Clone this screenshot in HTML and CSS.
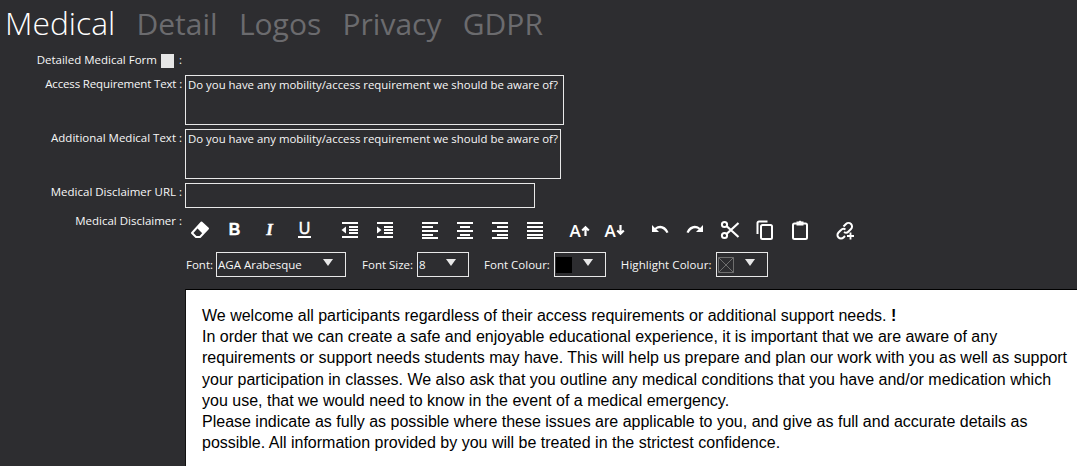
FILE: index.html
```html
<!DOCTYPE html>
<html lang="en">
<head>
  <meta charset="UTF-8">
  <title>Medical</title>
  <meta name="viewport" content="width=device-width, initial-scale=1.0" />
  <link rel="stylesheet" href="styles.css">
</head>
<body>
  <div class="tabs">
    <span class="tab active">Medical</span>
    <span class="tab">Detail</span>
    <span class="tab">Logos</span>
    <span class="tab">Privacy</span>
    <span class="tab">GDPR</span>
  </div>

  <div class="row row-check">
    <label class="field-label">Detailed Medical Form <input type="checkbox" class="check"> <span class="colon">:</span></label>
  </div>
  <div class="row row-access">
    <label class="field-label">Access Requirement Text :</label>
    <textarea class="area area-access">Do you have any mobility/access requirement we should be aware of?</textarea>
  </div>
  <div class="row row-additional">
    <label class="field-label">Additional Medical Text :</label>
    <textarea class="area area-additional">Do you have any mobility/access requirement we should be aware of?</textarea>
  </div>
  <div class="row row-url">
    <label class="field-label">Medical Disclaimer URL :</label>
    <input type="text" class="url">
  </div>
  <div class="row row-toolbar">
    <label class="field-label">Medical Disclaimer :</label>
    <div class="toolbar">
      <span class="tool">
        <svg viewBox="0 0 20 20"><path d="M11.500 2.500 18 8.500 10 17H6L2 13Z" fill="none" stroke="#fff" stroke-width="2" stroke-linejoin="round"/><path d="M11.500 2.500 18 8.500 13 14 6.800 7.800Z" fill="#fff"/></svg>
      </span>
      <span class="tool glyph">B</span>
      <span class="tool glyph glyph-italic">I</span>
      <span class="tool glyph"><span class="under">U</span></span>

      <span class="tool group-start">
        <svg viewBox="0 0 20 20"><path d="M2 3h16M9 7h9M9 10h9M9 13h9M2 17h16" stroke="#fff" stroke-width="2"/><path d="M6 6.500V13.500L1.500 10Z" fill="#fff"/></svg>
      </span>
      <span class="tool">
        <svg viewBox="0 0 20 20"><path d="M2 3h16M9 7h9M9 10h9M9 13h9M2 17h16" stroke="#fff" stroke-width="2"/><path d="M2 6.500V13.500L6.500 10Z" fill="#fff"/></svg>
      </span>

      <span class="tool group-start">
        <svg viewBox="0 0 20 20"><path d="M2 3h16M2 7h11M2 11h16M2 15h11M2 18h16" stroke="#fff" stroke-width="2"/></svg>
      </span>
      <span class="tool">
        <svg viewBox="0 0 20 20"><path d="M2 3h16M5 7h10M2 11h16M5 15h10M2 18h16" stroke="#fff" stroke-width="2"/></svg>
      </span>
      <span class="tool">
        <svg viewBox="0 0 20 20"><path d="M2 3h16M7 7h11M2 11h16M7 15h11M2 18h16" stroke="#fff" stroke-width="2"/></svg>
      </span>
      <span class="tool">
        <svg viewBox="0 0 20 20"><path d="M2 3h16M2 7h16M2 11h16M2 15h16M2 18h16" stroke="#fff" stroke-width="2"/></svg>
      </span>

      <span class="tool group-start glyph-size">A<svg class="size-arrow" viewBox="0 0 8 10"><path d="M4 10V2M1 5l3-3 3 3" fill="none" stroke="#fff" stroke-width="2"/></svg></span>
      <span class="tool glyph-size">A<svg class="size-arrow" viewBox="0 0 8 10"><path d="M4 0v8M1 5l3 3 3-3" fill="none" stroke="#fff" stroke-width="2"/></svg></span>

      <span class="tool group-start">
        <svg viewBox="0 0 20 20"><path d="M2 5v7h7L6.300 9.300C9.500 7 14 8 16.500 13l2-.8C15.500 5.500 9.500 4 4.900 7.900Z" fill="#fff"/></svg>
      </span>
      <span class="tool">
        <svg viewBox="0 0 20 20"><path d="M18 5v7h-7l2.700-2.700C10.500 7 6 8 3.500 13l-2-.8C4.500 5.500 10.500 4 15.100 7.900Z" fill="#fff"/></svg>
      </span>
      <span class="tool">
        <svg viewBox="0 0 20 20"><circle cx="4.500" cy="4.500" r="2.600" fill="none" stroke="#fff" stroke-width="2"/><circle cx="4.500" cy="15.500" r="2.600" fill="none" stroke="#fff" stroke-width="2"/><path d="M6.500 6 18.500 17M6.500 14 18.500 3" stroke="#fff" stroke-width="2.200"/></svg>
      </span>
      <span class="tool">
        <svg viewBox="0 0 20 20"><path d="M12.500 1.500H4a1.500 1.500 0 0 0-1.500 1.500v11" fill="none" stroke="#fff" stroke-width="2"/><rect x="6" y="5" width="11" height="14" rx="1.500" fill="none" stroke="#fff" stroke-width="2"/></svg>
      </span>
      <span class="tool">
        <svg viewBox="0 0 20 20"><rect x="3" y="3.500" width="14" height="15.500" rx="1.500" fill="none" stroke="#fff" stroke-width="2"/><path d="M6.500 1.500h2l1.500-1 1.500 1h2v4h-7Z" fill="#fff"/></svg>
      </span>
      <span class="tool group-start">
        <svg viewBox="0 0 20 20"><path d="M8.500 6.500 11 4a3.500 3.500 0 0 1 5 5l-2.500 2.500a3.500 3.500 0 0 1-4.500.5M10.500 9.500a3.500 3.500 0 0 0-4.500.5L3.500 12.500a3.500 3.500 0 0 0 5 5l1.500-1.500" fill="none" stroke="#fff" stroke-width="2"/><path d="M15.500 12.500v7M12 16h7" stroke="#fff" stroke-width="1.800"/></svg>
      </span>
    </div>
  </div>

  <div class="format-row">
    <span class="format-label label-font">Font:</span>
    <div class="drop drop-font"><span class="drop-text">AGA Arabesque</span><i class="arrow"></i></div>
    <span class="format-label">Font Size:</span>
    <div class="drop drop-size"><span class="drop-text">8</span><i class="arrow"></i></div>
    <span class="format-label">Font Colour:</span>
    <div class="drop drop-colour"><span class="swatch swatch-black"></span><i class="arrow"></i></div>
    <span class="format-label label-highlight">Highlight Colour:</span>
    <div class="drop drop-colour">
      <svg class="swatch-none" viewBox="0 0 16 16"><path d="M.5.500h15v15H.5ZM.5.500l15 15M15.500.500l-15 15" fill="none" stroke="#6e6e6e"/></svg>
      <i class="arrow"></i>
    </div>
  </div>

  <div class="editor">
    We welcome all participants regardless of their access requirements or additional support needs. <b>!</b><br>
    In order that we can create a safe and enjoyable educational experience, it is important that we are aware of any requirements or support needs students may have. This will help us prepare and plan our work with you as well as support your participation in classes. We also ask that you outline any medical conditions that you have and/or medication which you use, that we would need to know in the event of a medical emergency.<br>
    Please indicate as fully as possible where these issues are applicable to you, and give as full and accurate details as possible. All information provided by you will be treated in the strictest confidence.
  </div>
</body>
</html>
```

FILE: styles.css
```css
html, body { height: 466px; overflow: hidden; }
body { margin: 0; background: #2d2d30; color: #f7f7f7; font-family: 'Open Sans', Arial, sans-serif; font-size: 11.500px; }

.tabs { display: flex; align-items: baseline; gap: 21.300px; height: 46px; padding-left: 5px; font-size: 30px; line-height: 45px; }
.tab { color: #6b6b6e; }
.tab.active { color: #fff; font-size: 31.800px; font-weight: 300; }

.row { display: flex; align-items: flex-start; }
.field-label { width: 182px; flex: none; margin-right: 3px; text-align: right; line-height: 16px; white-space: nowrap; }

.row-check { height: 21px; padding-top: 6px; margin-bottom: 2px; }
.row-check .field-label { display: flex; justify-content: flex-end; align-items: center; gap: 4px; }
.check { appearance: none; width: 13px; height: 14px; margin: 1px 1px 0 0; background: #e6e6e6; border: none; border-radius: 0; }

.row-access { height: 50px; margin-bottom: 4px; }
.row-access .field-label { letter-spacing: -.15px; }
.row-additional { height: 50px; margin-bottom: 4px; }
.row-url { height: 25px; margin-bottom: 4px; }
.row-access .field-label, .row-additional .field-label, .row-url .field-label { padding-top: 1px; }

.area, .url { box-sizing: border-box; display: block; margin: 0; background: transparent; border: 1px solid #e8e8e8; border-radius: 0; color: #f7f7f7; font-family: inherit; font-size: 11.400px; outline: none; }
.area { height: 100%; padding: 1px 2px; resize: none; overflow: hidden; line-height: 16px; }
.area-access { width: 379px; }
.area-additional { width: 376px; }
.url { width: 350px; height: 100%; }

.row-toolbar { height: 40px; }
.row-toolbar .field-label { padding-top: 1px; }
.toolbar { display: flex; margin-left: -3px; margin-top: 3px; }
.tool { display: flex; align-items: center; justify-content: center; width: 35px; height: 30px; color: #fff; }
.tool svg { width: 20px; height: 20px; }
.group-start { margin-left: 10px; }
.glyph { font-family: 'Liberation Sans', Arial, sans-serif; font-size: 16px; font-weight: bold; -webkit-text-stroke: .4px #fff; }
.glyph-italic { font-family: 'Liberation Serif', serif; font-style: italic; font-size: 17px; }
.under { display: block; line-height: 13px; padding: 0 1px 1px; border-bottom: 2px solid #fff; font-weight: normal; }
.glyph-size { font-family: 'Open Sans', Arial, sans-serif; font-size: 17px; font-weight: 600; }
.tool .size-arrow { width: 9px; height: 11px; margin-left: 0; }

.format-row { display: flex; align-items: center; height: 25px; margin: 0 0 12px 186px; }
.format-label { margin-right: 4px; white-space: nowrap; }
.label-font { margin-right: 3px; }
.label-highlight { letter-spacing: .06px; }
.drop { box-sizing: border-box; display: flex; align-items: center; height: 25px; margin-right: 15px; border: 1px solid #e8e8e8; }
.drop-font { width: 130px; margin-right: 16px; }
.drop-size { width: 52px; }
.drop-colour { width: 52px; }
.drop-text { padding-left: 1px; color: #f7f7f7; }
.arrow { width: 0; height: 0; margin-left: auto; margin-right: 12px; margin-top: -4px; border-left: 5px solid transparent; border-right: 5px solid transparent; border-top: 7px solid #e8e8e8; }
.swatch { width: 16px; height: 16px; margin-left: 1px; }
.swatch-black { background: #000; }
.swatch-none { width: 16px; height: 16px; margin-left: 1px; flex: none; }

.editor { box-sizing: border-box; height: 177px; margin-left: 185px; padding: 15px 8px 0 16px; background: #fff; color: #000; font-family: 'Liberation Sans', Arial, sans-serif; font-size: 16px; line-height: 21.200px; border-top: 1px solid #000; border-left: 1px solid #111; }
```
